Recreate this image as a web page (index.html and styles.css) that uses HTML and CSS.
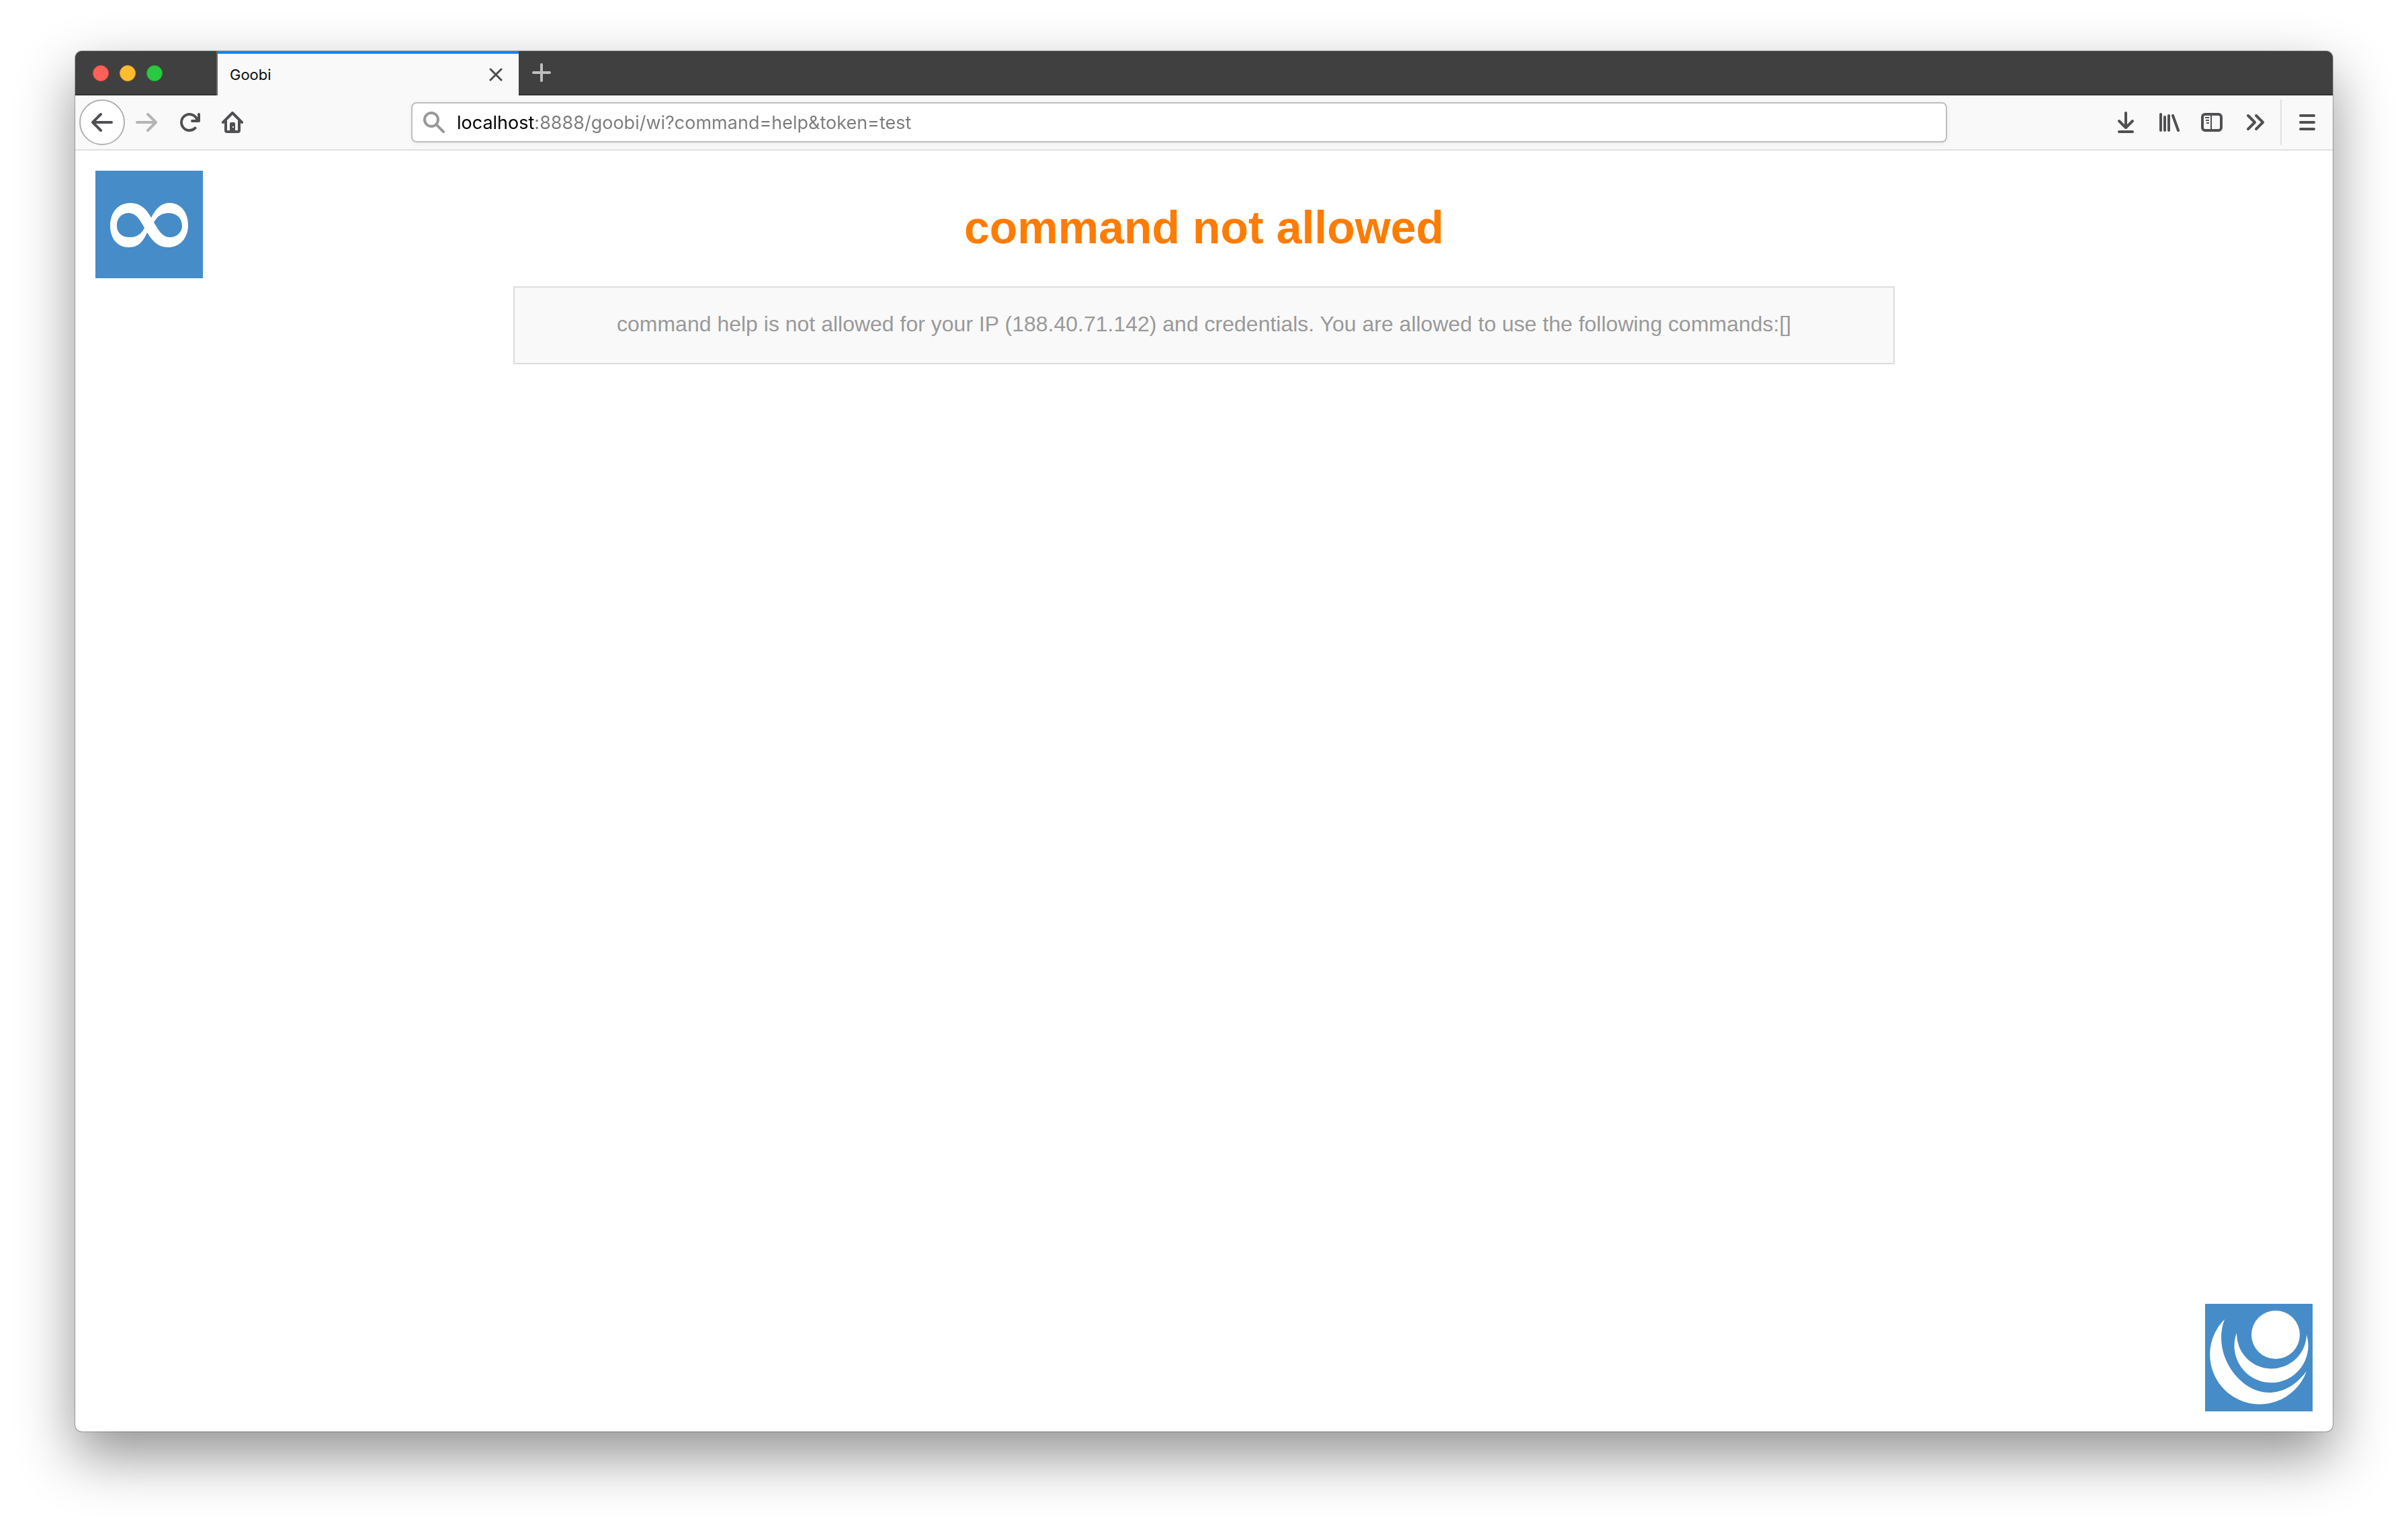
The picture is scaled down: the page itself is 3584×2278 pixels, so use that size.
FILE: index.html
```html
<!DOCTYPE html>
<html lang="en">
<head>
<meta charset="utf-8">
<title>Goobi</title>
<link rel="stylesheet" href="styles.css">
</head>
<body>
<div class="window">
  <header class="tabstrip">
    <div class="lights">
      <button class="light light-close" aria-label="Close window"></button>
      <button class="light light-minimize" aria-label="Minimize window"></button>
      <button class="light light-zoom" aria-label="Zoom window"></button>
    </div>
    <div class="tab">
      <span class="tab-title">Goobi</span>
      <button class="tab-close" aria-label="Close tab">
        <svg width="20" height="20" viewBox="0 0 20 20"><path class="stroke" stroke-width="3" d="M2 2l16 16M18 2L2 18"/></svg>
      </button>
    </div>
    <button class="tab-new" aria-label="New tab">
      <svg width="28" height="28" viewBox="0 0 28 28"><path class="stroke" stroke-width="4" d="M14 2v24M2 14h24"/></svg>
    </button>
  </header>

  <nav class="toolbar">
    <div class="tools tools-left">
      <button class="tool tool-back" aria-label="Back">
        <svg class="icon" viewBox="0 0 16 16"><path d="M15 7H3.414l4.293-4.293a1 1 0 0 0-1.414-1.414l-6 6a1 1 0 0 0 0 1.414l6 6a1 1 0 0 0 1.414-1.414L3.414 9H15a1 1 0 0 0 0-2z"/></svg>
      </button>
      <button class="tool" aria-label="Forward" disabled>
        <svg class="icon" viewBox="0 0 16 16"><path d="M1 7h11.586L8.293 2.707a1 1 0 0 1 1.414-1.414l6 6a1 1 0 0 1 0 1.414l-6 6a1 1 0 0 1-1.414-1.414L12.586 9H1a1 1 0 0 1 0-2z"/></svg>
      </button>
      <button class="tool" aria-label="Reload">
        <svg class="icon" viewBox="0 0 16 16"><path d="M15 1a1 1 0 0 0-1 1v2.418A6.995 6.995 0 1 0 8 15a6.954 6.954 0 0 0 4.95-2.05 1 1 0 0 0-1.414-1.414A5.019 5.019 0 1 1 12.549 6H10a1 1 0 0 0 0 2h5a1 1 0 0 0 1-1V2a1 1 0 0 0-1-1z"/></svg>
      </button>
      <button class="tool" aria-label="Home">
        <svg class="icon" viewBox="0 0 16 16"><path class="stroke" stroke-width="2" d="M1 8l7-7 7 7M3 7v7a1 1 0 0 0 1 1h8a1 1 0 0 0 1-1V7"/><path fill-rule="evenodd" d="M6 15V9a1 1 0 0 1 1-1h2a1 1 0 0 1 1 1v6zM8 11v1h1v-1z"/></svg>
      </button>
    </div>
    <label class="urlbar">
      <svg class="icon icon-search" viewBox="0 0 16 16"><path d="M15.707 14.293l-4.822-4.822a6.019 6.019 0 1 0-1.414 1.414l4.822 4.822a1 1 0 0 0 1.414-1.414zM6 10a4 4 0 1 1 4-4 4 4 0 0 1-4 4z"/></svg>
      <input class="url" type="text" aria-label="Address" spellcheck="false" value="localhost:8888/goobi/wi?command=help&amp;token=test">
    </label>
    <div class="tools tools-right">
      <button class="tool" aria-label="Downloads">
        <svg class="icon" viewBox="0 0 16 16"><path class="stroke" stroke-width="2" d="M8 1v10.500M3 7l5 5 5-5M3 15h10"/></svg>
      </button>
      <button class="tool" aria-label="Library">
        <svg class="icon" viewBox="0 0 16 16"><path class="stroke" stroke-width="2" d="M2 2v12M5 4v10M8 3v11M11 3l4 11"/></svg>
      </button>
      <button class="tool" aria-label="Sidebars">
        <svg class="icon" viewBox="0 0 16 16"><rect class="stroke" stroke-width="2" x="1" y="2" width="14" height="12" rx="2"/><path d="M7 2h1v12H7zM3 4h3v1H3zM3.500 6H6v1H3.500zM4 8h2v1H4z"/></svg>
      </button>
      <button class="tool" aria-label="More tools">
        <svg class="icon" viewBox="0 0 16 16"><path class="stroke" stroke-width="2" d="M3 3l5 5-5 5M9 3l5 5-5 5"/></svg>
      </button>
    </div>
    <button class="tool tool-menu" aria-label="Open menu">
      <svg class="icon" viewBox="0 0 16 16"><path class="stroke" stroke-width="2" d="M3 3h10M3 8h10M3 13h10"/></svg>
    </button>
  </nav>

  <main class="page">
    <svg class="logo" viewBox="0 0 160 160" role="img" aria-label="Goobi">
      <path fill-rule="evenodd" d="M83 70C90 56 98 48 110 48C127 48 138 62 138 81C138 100 126 114 108 114C94 114 85 105 77 92C71 105 64 114 50 114C33 114 22 101 22 82C22 62 34 48 52 48C67 48 76 57 83 70zM32 80C31 92 39 99 51 99C63 99 69 93 73 85C66 73 61 63 49 63C39 63 32 71 32 80zM87 77C94 88 99 99 111 99C122 99 129 91 129 82C129 71 121 63 109 63C98 63 92 68 87 77z"/>
    </svg>
    <section class="message">
      <h1 class="title">command not allowed</h1>
      <p class="detail">command help is not allowed for your IP (188.40.71.142) and credentials. You are allowed to use the following commands:[]</p>
    </section>
    <svg class="logo logo-vendor" viewBox="0 0 160 160" role="img" aria-label="intranda">
      <circle cx="105" cy="46" r="36"/>
      <path d="M47 43A55 55 0 1 0 151 46A52 52 0 0 1 47 43z"/>
      <path d="M29 23A74 74 0 1 0 151 100C135 122 115 132 95 132C58 132 24 92 24 50C24 40 26 31 29 23z"/>
    </svg>
  </main>
</div>
</body>
</html>
```
FILE: styles.css
```css
* {
  box-sizing: border-box;
}

body {
  margin: 0;
  min-height: 100vh;
  padding: 76px 112px 148px;
  display: flex;
  background: #fff;
  font-family: Inter, "Liberation Sans", sans-serif;
}

button {
  border: 0;
  padding: 0;
  background: none;
  color: inherit;
}

svg {
  display: block;
  fill: currentColor;
}

.stroke {
  fill: none;
  stroke: currentColor;
  stroke-linecap: round;
  stroke-linejoin: round;
}

.window {
  flex: 1;
  display: flex;
  flex-direction: column;
  overflow: hidden;
  border-radius: 10px;
  background: #fff;
  box-shadow: 0 0 0 1px rgba(0, 0, 0, 0.26), 0 36px 84px rgba(0, 0, 0, 0.43);
}

/* Tab strip */

.tabstrip {
  display: flex;
  height: 66px;
  background: linear-gradient(#404040, #404040) top / 100% 64px no-repeat #303030;
}

.lights {
  display: flex;
  align-items: center;
  gap: 16px;
  width: 212px;
  padding-left: 26px;
  border-right: 2px solid #686868;
}

.light {
  width: 24px;
  height: 24px;
  border-radius: 50%;
}

.light-close {
  background: #ff6158;
  border: 1px solid #e2463f;
}

.light-minimize {
  background: #ffbd2e;
  border: 1px solid #e1a023;
}

.light-zoom {
  background: #28ca41;
  border: 1px solid #1aad2b;
}

.tab {
  display: flex;
  align-items: center;
  justify-content: space-between;
  width: 448px;
  padding: 0 24px 0 18px;
  border-top: 4px solid #0a84ff;
  background: #f9f9fa;
  color: #0c0c0d;
}

.tab-title {
  font-size: 22px;
  line-height: 28px;
}

.tab-close {
  color: #4c4c4e;
}

.tab-new {
  width: 68px;
  padding: 0 20px 2px;
  color: #bfbfbf;
}

/* Navigation toolbar */

.toolbar {
  display: flex;
  align-items: center;
  height: 82px;
  padding-left: 6px;
  border-bottom: 2px solid #e0e0e1;
  background: #f9f9fa;
  color: #505052;
}

.tools {
  display: flex;
}

.tools-left {
  width: 494px;
}

.tool {
  display: flex;
  align-items: center;
  justify-content: center;
  width: 64px;
  height: 68px;
}

.tool:disabled {
  color: #b4b4b5;
}

.tool-back {
  width: 68px;
  border: 2px solid #b1b1b2;
  border-radius: 50%;
  background: #fff;
}

.icon {
  width: 32px;
  height: 32px;
}

.urlbar {
  flex: 1;
  display: flex;
  align-items: center;
  height: 60px;
  padding: 0 16px;
  border: 2px solid #bebebe;
  border-radius: 8px;
  background: #fff;
  box-shadow: 0 2px 8px rgba(0, 0, 0, 0.06);
}

.icon-search {
  color: #999;
}

.url {
  flex: 1;
  height: 40px;
  margin-left: 18px;
  padding: 0;
  border: 0;
  outline: 0;
  font-family: inherit;
  font-size: 27px;
  /* The host is drawn darker than the rest of the address. */
  color: transparent;
  background: linear-gradient(to right, #000 116px, #7c7c7d 116px);
  -webkit-background-clip: text;
  background-clip: text;
}

.tools-right {
  width: 496px;
  justify-content: flex-end;
  padding-right: 6px;
}

.tool-menu {
  width: 78px;
  border-left: 2px solid #e0e0e1;
}

/* Page */

.page {
  flex: 1;
  display: flex;
  justify-content: space-between;
  padding: 30px;
  font-family: "Liberation Sans", Arial, sans-serif;
}

.logo {
  flex: none;
  width: 160px;
  height: 160px;
  background: #468cc8;
  color: #fff;
}

.logo-vendor {
  align-self: flex-end;
}

.message {
  flex: 0 1 2056px;
  text-align: center;
}

.title {
  margin: 44px 0 48px;
  font-size: 68px;
  line-height: 80px;
  color: #ff7c00;
}

.detail {
  margin: 0;
  padding: 36px 32px 40px;
  border: 2px solid #ddd;
  background: #f9f9f9;
  font-size: 32px;
  line-height: 36px;
  color: #999;
}
```
